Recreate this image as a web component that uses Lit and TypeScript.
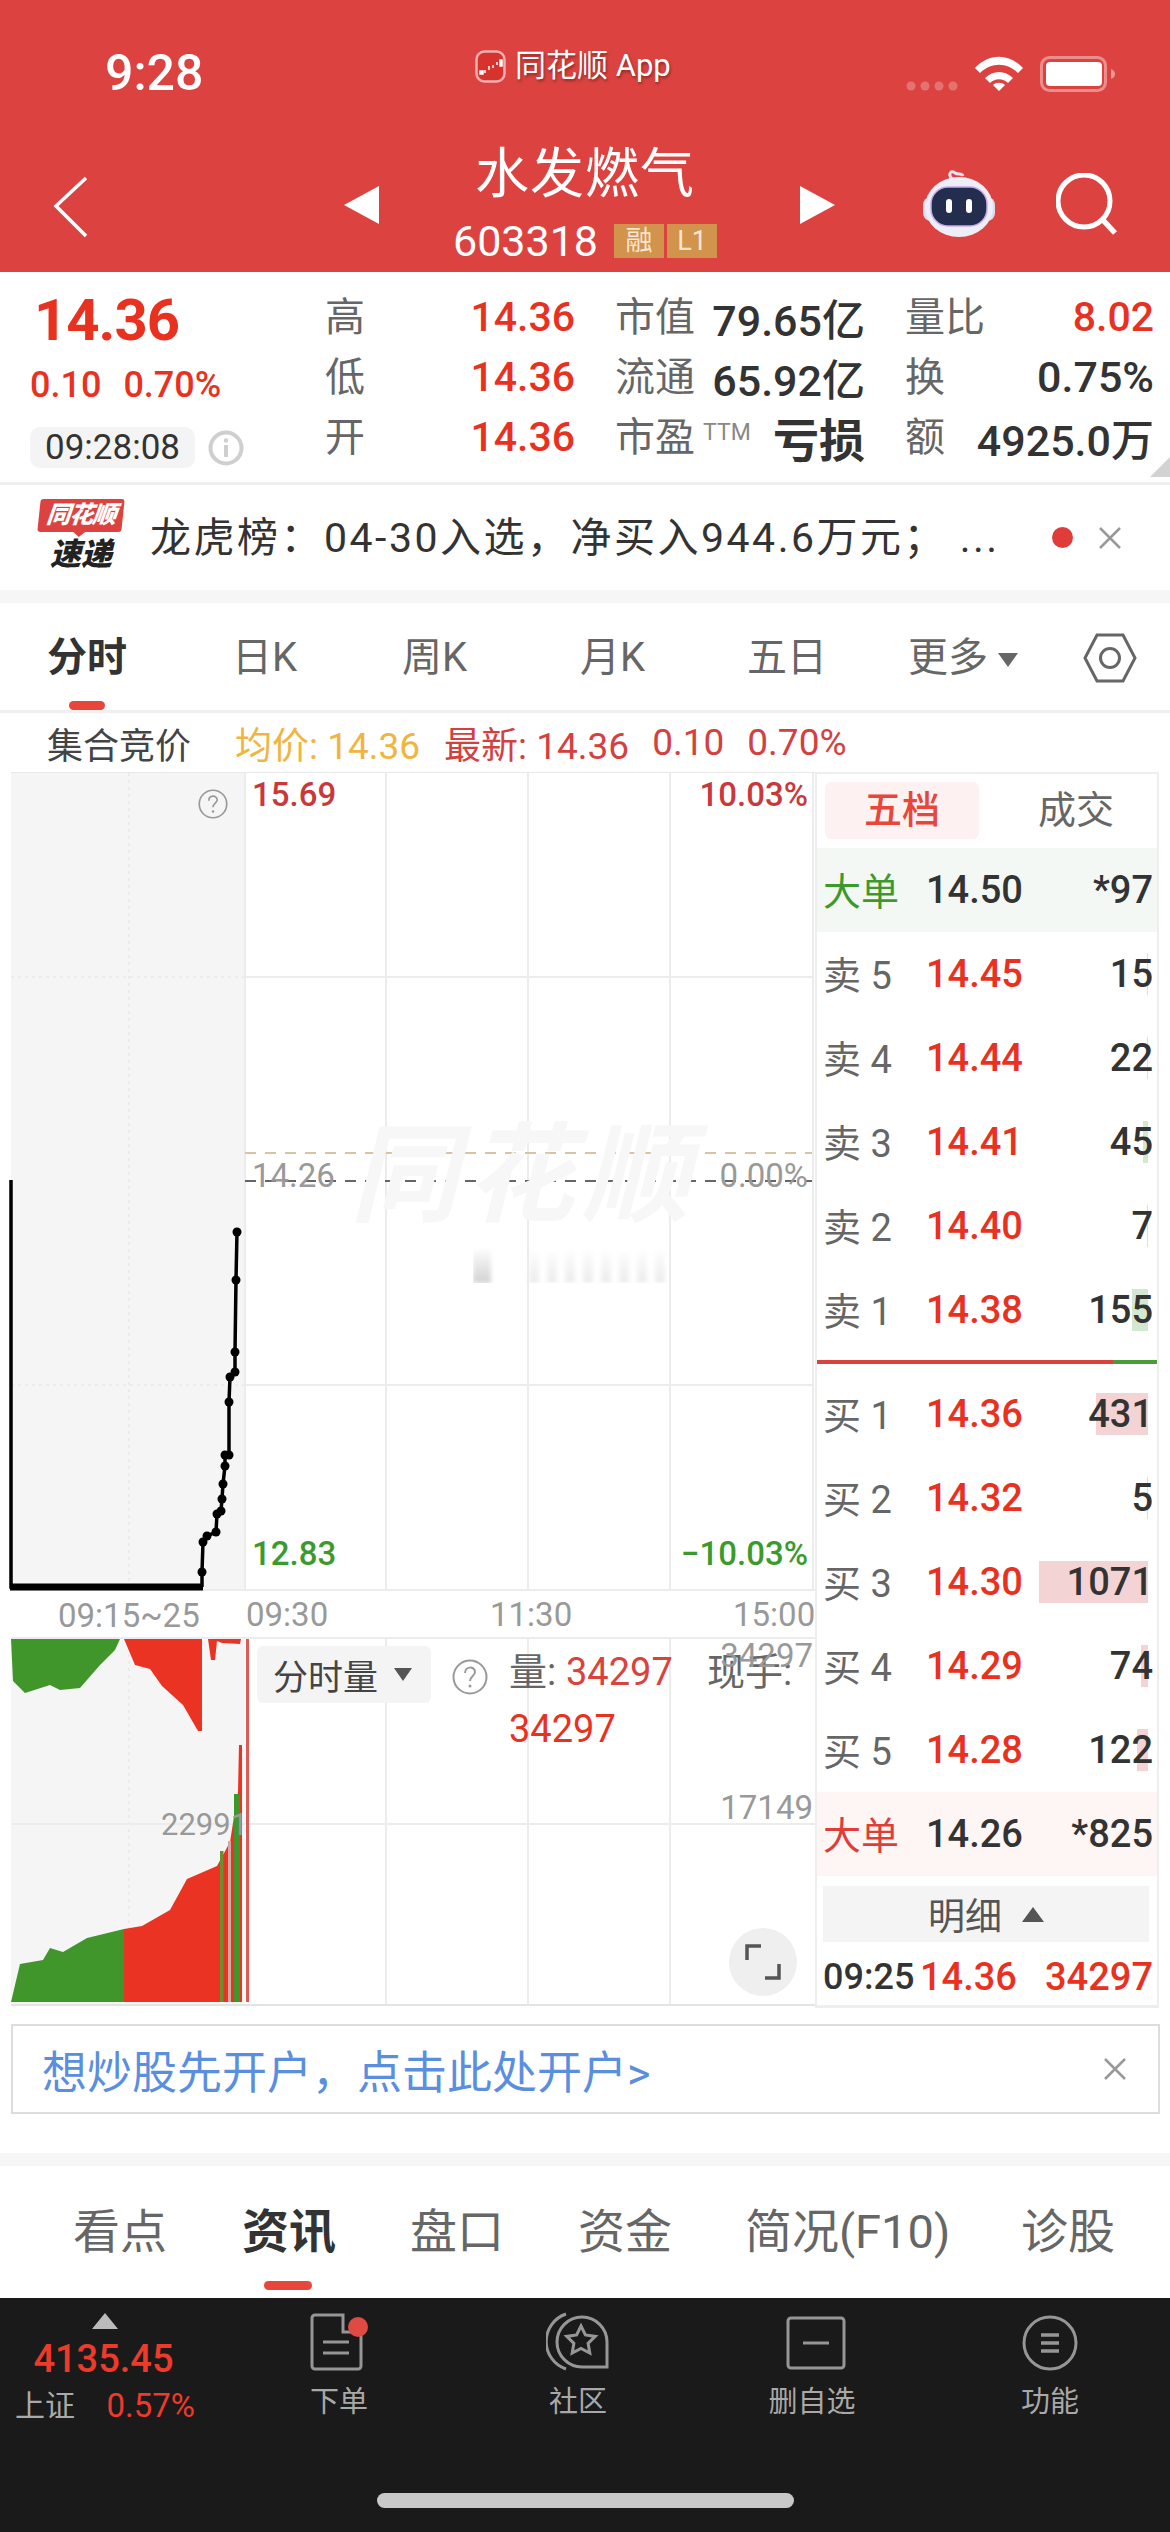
import { LitElement, html, css, svg, unsafeCSS } from 'lit'
import { customElement } from 'lit/decorators.js'

const SANS = unsafeCSS(`Roboto, 'Noto Sans CJK SC', sans-serif`)

const priceLine: [number, number][] = [
    [202, 1587], [202, 1572], [203, 1542], [207, 1536], [216, 1532], [217, 1514], [221, 1511],
    [222, 1499], [223, 1484], [225, 1466], [225, 1455], [229, 1455], [229, 1402], [230, 1377],
    [235, 1372], [235, 1352], [236, 1280], [237, 1232],
]

const sells = [
    { name: '卖 5', price: '14.45', vol: '15', bar: 1 },
    { name: '卖 4', price: '14.44', vol: '22', bar: 1 },
    { name: '卖 3', price: '14.41', vol: '45', bar: 5 },
    { name: '卖 2', price: '14.40', vol: '7', bar: 1 },
    { name: '卖 1', price: '14.38', vol: '155', bar: 16 },
]
const buys = [
    { name: '买 1', price: '14.36', vol: '431', bar: 52 },
    { name: '买 2', price: '14.32', vol: '5', bar: 1 },
    { name: '买 3', price: '14.30', vol: '1071', bar: 109 },
    { name: '买 4', price: '14.29', vol: '74', bar: 7 },
    { name: '买 5', price: '14.28', vol: '122', bar: 11 },
]

@customElement('app-root')
export class AppRoot extends LitElement {
    static styles = css`
        :host {
            display: block;
            width: 1170px;
            height: 2532px;
            overflow: hidden;
            background: #fff;
            font-family: ${SANS};
            color: #333;
        }
        .head {
            height: 272px;
            background: #dc4340;
            color: #fff;
            display: flex;
            flex-direction: column;
        }
        .status {
            height: 136px;
            display: grid;
            grid-template-columns: 370px auto 1fr;
            align-items: start;
            padding: 0 55px 0 105px;
        }
        .clock {
            font-size: 50px;
            font-weight: 500;
            line-height: 50px;
            margin-top: 48px;
        }
        .app-name {
            display: flex;
            align-items: center;
            gap: 9px;
            margin-top: 47px;
            font-size: 31px;
            line-height: 38px;
            text-shadow: 1px 2px 3px rgba(90, 20, 20, 0.6);
        }
        .status-right {
            display: flex;
            justify-content: flex-end;
            align-items: flex-start;
            margin-top: 55px;
        }
        .nav {
            flex: 1;
            display: grid;
            grid-template-columns: 1fr auto 1fr;
            align-items: start;
        }
        .nav-left {
            display: flex;
            justify-content: space-between;
            padding: 40px 74px 0 53px;
        }
        .nav-right {
            display: flex;
            justify-content: space-between;
            padding: 33px 52px 0 83px;
        }
        .title {
            display: flex;
            flex-direction: column;
            align-items: center;
            margin-top: 4px;
        }
        .title h1 {
            margin: 0;
            font-size: 54px;
            font-weight: 400;
            line-height: 70px;
            letter-spacing: 1px;
        }
        .code {
            display: flex;
            align-items: center;
            gap: 3px;
            font-size: 43px;
            line-height: 50px;
            margin-top: 6px;
        }
        .tag {
            width: 50px;
            height: 34px;
            background: #d2934d;
            font-size: 27px;
            line-height: 34px;
            text-align: center;
            color: #f8e6d0;
        }
        .tag:first-of-type {
            margin-left: 13px;
        }
        .quote {
            height: 210px;
            position: relative;
            display: grid;
            grid-template-columns: 295px 290px 290px 1fr;
            padding: 0 16px 0 30px;
            border-bottom: 3px solid #efefef;
        }
        .main-price {
            font-size: 58px;
            font-weight: 700;
            line-height: 70px;
            margin-top: 13px;
            color: #e8311f;
            letter-spacing: -1px;
            padding-left: 4px;
        }
        .main-change {
            font-size: 36px;
            font-weight: 500;
            line-height: 40px;
            margin-top: 10px;
            color: #e8311f;
            display: flex;
            gap: 22px;
        }
        .stamp {
            display: flex;
            align-items: center;
            gap: 13px;
            margin-top: 22px;
        }
        .stamp span {
            background: #f4f4f4;
            border-radius: 10px;
            width: 165px;
            height: 41px;
            font-size: 35px;
            line-height: 41px;
            text-align: center;
        }
        .col {
            display: flex;
            flex-direction: column;
            padding-top: 15px;
        }
        .row {
            height: 60px;
            display: flex;
            align-items: center;
            justify-content: space-between;
            font-size: 41px;
            font-weight: 500;
            white-space: nowrap;
        }
        .row em {
            font-style: normal;
            font-weight: 400;
            font-size: 40px;
            color: #666;
            transform: translateY(-3px);
        }
        .row .d {
            font-size: 43px;
        }
        .row .loss {
            font-size: 46px;
            font-weight: 700;
        }
        .row sup {
            font-size: 23px;
            font-weight: 400;
            color: #888;
            margin: 0 auto 10px 8px;
            line-height: 1;
        }
        .col.a,
        .col.b {
            padding-right: 40px;
        }
        .red {
            color: #e8311f;
        }
        .corner {
            position: absolute;
            right: 0;
            bottom: 5px;
            width: 0;
            height: 0;
            border-left: 20px solid transparent;
            border-bottom: 20px solid #d2d2d2;
        }
        .news {
            height: 105px;
            display: flex;
            align-items: center;
            padding: 0 47px 0 37px;
            font-size: 41px;
            line-height: 50px;
            border-bottom: 13px solid #f6f6f6;
        }
        .news-text {
            flex: 1;
            margin-left: 25px;
            white-space: nowrap;
            letter-spacing: 2.5px;
            color: #333;
        }
        .news-dot {
            width: 21px;
            height: 21px;
            border-radius: 50%;
            background: #e03d3a;
            margin-right: 24px;
        }
        .logo {
            width: 88px;
            height: 78px;
            display: flex;
            flex-direction: column;
            align-items: center;
        }
        .logo b {
            width: 84px;
            height: 33px;
            background: #dc4340;
            color: #fff;
            font-size: 24px;
            line-height: 33px;
            text-align: center;
            font-style: italic;
            font-weight: 900;
            border-radius: 3px;
            transform: skewX(-6deg);
            white-space: nowrap;
            letter-spacing: -1px;
            position: relative;
        }
        .logo b::after {
            content: '';
            position: absolute;
            left: 36px;
            top: 33px;
            border-left: 6px solid transparent;
            border-right: 6px solid transparent;
            border-top: 5px solid #dc4340;
        }
        .logo i {
            font-size: 31px;
            line-height: 37px;
            font-weight: 900;
            color: #222;
            margin-top: 4px;
            white-space: nowrap;
        }
        .tabs {
            height: 110px;
            box-sizing: border-box;
            border-bottom: 3px solid #f0f0f0;
            position: relative;
            font-size: 40px;
            color: #666;
        }
        .tab {
            position: absolute;
            top: 30px;
            line-height: 50px;
            white-space: nowrap;
        }
        .tab.on {
            color: #333;
            font-weight: 700;
        }
        .tab-bar {
            position: absolute;
            left: 69px;
            bottom: 0;
            width: 36px;
            height: 9px;
            border-radius: 5px;
            background: #e8463a;
        }
        .sub {
            height: 59px;
            display: flex;
            align-items: center;
            font-size: 37px;
            padding-left: 47px;
            white-space: nowrap;
        }
        .sub .auction {
            font-size: 36px;
            color: #444;
            margin-right: 44px;
        }
        .sub .avg {
            color: #f0b540;
            margin-right: 24px;
        }
        .sub .last {
            color: #d4403f;
            display: flex;
            align-items: center;
            gap: 23px;
        }
        .board {
            height: 1236px;
            display: grid;
            grid-template-columns: 815px 344px;
            align-items: start;
        }
        .chart {
            position: relative;
            height: 1236px;
            overflow: hidden;
        }
        .chart > svg {
            position: absolute;
            left: 0;
            top: 0;
        }
        .lbl {
            position: absolute;
            font-size: 33px;
            line-height: 36px;
            white-space: nowrap;
            transform: translateY(-50%);
        }
        .lbl.r {
            right: 7px;
        }
        .lbl.big {
            font-size: 38px;
        }
        .grey {
            color: #999;
        }
        .up {
            color: #c9383a;
            font-weight: 500;
        }
        .down {
            color: #3c9a2c;
            font-weight: 500;
        }
        .watermark {
            position: absolute;
            left: 350px;
            top: 350px;
            font-size: 108px;
            line-height: 108px;
            font-weight: 700;
            font-style: italic;
            letter-spacing: 8px;
            color: #f7f7f7;
            white-space: nowrap;
        }
        .mask {
            position: absolute;
            left: 473px;
            top: 475px;
            width: 220px;
            height: 36px;
            display: flex;
            gap: 8px;
            filter: blur(2px);
            -webkit-mask-image: linear-gradient(to bottom, transparent, #000);
        }
        .mask i {
            width: 10px;
            background: #ececec;
        }
        .mask i:first-child {
            width: 18px;
            margin-right: 30px;
            background: #d2d2d2;
        }
        .chip {
            position: absolute;
            left: 257px;
            top: 874px;
            width: 174px;
            height: 57px;
            box-sizing: border-box;
            padding-left: 16px;
            display: flex;
            align-items: center;
            gap: 16px;
            background: #f4f4f4;
            border-radius: 6px;
            font-size: 35px;
            color: #444;
        }
        .caret {
            width: 0;
            height: 0;
            border-left: 9px solid transparent;
            border-right: 9px solid transparent;
            border-top: 13px solid #555;
        }
        .expand {
            position: absolute;
            left: 729px;
            top: 1156px;
            width: 68px;
            height: 68px;
            border-radius: 50%;
            background: #efefef;
            display: flex;
            align-items: center;
            justify-content: center;
        }
        .depth {
            height: 1236px;
            border: 2px solid #eee;
            border-bottom-width: 3px;
            box-sizing: border-box;
            width: 344px;
            display: flex;
            flex-direction: column;
        }
        .seg {
            height: 74px;
            display: flex;
            align-items: flex-start;
            font-size: 38px;
            color: #666;
            flex: none;
        }
        .seg span {
            height: 57px;
            margin-top: 8px;
            line-height: 57px;
            text-align: center;
            width: 154px;
            margin-left: 8px;
            border-radius: 6px;
            flex: none;
        }
        .seg span:last-child {
            flex: 1;
            padding-left: 8px;
        }
        .seg .on {
            background: #fdf2f1;
            color: #e8463a;
            font-weight: 500;
        }
        .lv {
            height: 84px;
            flex: none;
            display: grid;
            grid-template-columns: 103px 94px 1fr;
            align-items: center;
            padding: 0 4px 0 6px;
            font-size: 38px;
            font-weight: 500;
            white-space: nowrap;
        }
        .lv em {
            font-style: normal;
            font-weight: 400;
            font-size: 38px;
            color: #666;
            transform: translateY(-2px);
        }
        .lv .p {
            color: #e8311f;
        }
        .lv .v {
            position: relative;
            text-align: right;
            line-height: 42px;
            color: #333;
        }
        .vol-bar {
            position: absolute;
            right: 5px;
            top: 0;
            bottom: 0;
        }
        .vol-num {
            position: relative;
        }
        .lv.big-g {
            background: #f3f8f4;
        }
        .lv.big-g em {
            color: #3c9a2c;
        }
        .lv.big-r {
            background: #fdf6f5;
        }
        .lv.big-r em {
            color: #e03d3a;
        }
        .big-p {
            color: #333;
        }
        .split {
            height: 4px;
            flex: none;
            margin: 8px 0;
            background: linear-gradient(90deg, #d9433c 0 87%, #4a9c3a 87%);
        }
        .detail {
            flex: none;
            height: 56px;
            margin: 10px 8px 0 6px;
            background: #f4f4f4;
            display: flex;
            align-items: center;
            justify-content: center;
            gap: 20px;
            font-size: 37px;
            color: #555;
        }
        .detail i {
            border-left: 11px solid transparent;
            border-right: 11px solid transparent;
            border-bottom: 15px solid #555;
        }
        .tick {
            flex: none;
            height: 58px;
            margin-top: 6px;
            display: grid;
            grid-template-columns: 97px 94px 1fr;
            align-items: center;
            padding: 0 4px 0 6px;
            font-size: 38px;
            font-weight: 500;
        }
        .tick span:first-child {
            font-size: 36px;
        }
        .banner {
            margin: 16px 10px 0 11px;
            height: 90px;
            box-sizing: border-box;
            border: 2px solid #ddd;
            display: flex;
            align-items: center;
            justify-content: space-between;
            padding: 0 31px 0 29px;
            font-size: 45px;
            color: #5a8ede;
            white-space: nowrap;
        }
        .band {
            height: 13px;
            margin-top: 39px;
            background: #f6f6f6;
        }
        .lower {
            height: 132px;
            position: relative;
            font-size: 47px;
            color: #666;
        }
        .lower span {
            position: absolute;
            top: 37px;
            line-height: 58px;
            white-space: nowrap;
        }
        .lower .on {
            color: #333;
            font-weight: 700;
        }
        .lower i {
            position: absolute;
            left: 264px;
            top: 115px;
            width: 48px;
            height: 9px;
            border-radius: 5px;
            background: #e8463a;
        }
        .dock {
            height: 234px;
            background: #1a1a1a;
            position: relative;
        }
        .index {
            position: absolute;
            left: 15px;
            top: 15px;
            width: 180px;
            display: flex;
            flex-direction: column;
            align-items: center;
        }
        .index i {
            border-left: 13px solid transparent;
            border-right: 13px solid transparent;
            border-bottom: 16px solid #bbb;
        }
        .index b {
            font-size: 38px;
            font-weight: 500;
            line-height: 44px;
            color: #ee3a2a;
            margin-top: 8px;
            margin-right: 3px;
        }
        .index div {
            display: flex;
            align-self: stretch;
            justify-content: space-between;
            align-items: center;
            font-size: 30px;
            line-height: 44px;
            margin-top: 3px;
            color: #aaa;
        }
        .index div span {
            font-size: 33px;
            color: #ee3a2a;
        }
        .action {
            position: absolute;
            top: 14px;
            width: 120px;
            display: flex;
            flex-direction: column;
            align-items: center;
            font-size: 29px;
            line-height: 34px;
            color: #a8a8a8;
        }
        .action svg {
            margin-bottom: 13px;
        }
        .home {
            position: absolute;
            left: 377px;
            top: 195px;
            width: 417px;
            height: 15px;
            border-radius: 8px;
            background: #c8c8c8;
        }
    `

    private renderPriceSvg() {
        const pts = priceLine.map((p) => p.join(',')).join(' ')
        const gridX = [386, 528, 670]
        return html`<svg width="815" height="1236" viewBox="0 772 815 1236">
            <rect x="11" y="773" width="234" height="816" fill="#f5f5f5" />
            <rect x="11" y="1640" width="234" height="364" fill="#f5f5f5" />
            ${gridX.map(
                (x) => svg`<line x1=${x} y1="773" x2=${x} y2="1590" stroke="#ececec" stroke-width="2" />
                    <line x1=${x} y1="1639" x2=${x} y2="2005" stroke="#ececec" stroke-width="2" />`
            )}
            ${[977, 1385].map(
                (y) => svg`<line x1="245" y1=${y} x2="813" y2=${y} stroke="#ececec" stroke-width="2" />
                    <line x1="11" y1=${y} x2="245" y2=${y} stroke="#ececec" stroke-width="2" stroke-dasharray="3 4" />`
            )}
            <line x1="129" y1="773" x2="129" y2="1590" stroke="#ebebeb" stroke-width="2" stroke-dasharray="3 4" />
            <line x1="129" y1="1640" x2="129" y2="2002" stroke="#ebebeb" stroke-width="2" stroke-dasharray="3 4" />
            <line x1="245" y1="773" x2="245" y2="1590" stroke="#ececec" stroke-width="2" />
            <line x1="11" y1="772" x2="815" y2="772" stroke="#e8e8e8" stroke-width="2" />
            <line x1="11" y1="1590" x2="815" y2="1590" stroke="#ececec" stroke-width="2" />
            <line x1="11" y1="1638" x2="815" y2="1638" stroke="#ececec" stroke-width="2" />
            <line x1="11" y1="2005" x2="815" y2="2005" stroke="#e4e4e4" stroke-width="2" />
            <line x1="11" y1="1824" x2="815" y2="1824" stroke="#ececec" stroke-width="2" />
            <line x1="813" y1="773" x2="813" y2="1590" stroke="#ececec" stroke-width="2" />

            <line x1="245" y1="1153" x2="812" y2="1153" stroke="#d8c4a2" stroke-width="2" stroke-dasharray="11 9" />
            <line x1="245" y1="1181" x2="812" y2="1181" stroke="#666" stroke-width="2" stroke-dasharray="11 9" />

            <polyline points="11,1180 11,1587 202,1587" fill="none" stroke="#000" stroke-width="3.5" />
            <line x1="10" y1="1587" x2="203" y2="1587" stroke="#000" stroke-width="7" />
            <polyline points=${pts} fill="none" stroke="#000" stroke-width="3.5" />
            ${priceLine.slice(1).map(([x, y]) => svg`<circle cx=${x} cy=${y} r="4.5" fill="#000" />`)}

            <path d="M11 1639 L13 1681 L25 1693 L50 1685 L60 1690 L80 1688 L100 1665 L115 1650 L120 1639Z" fill="#41962b" />
            <path d="M124 1639 L135 1665 L150 1669 L162 1686 L183 1705 L198 1731 L202 1731 L202 1639Z" fill="#ea3323" />
            <path d="M208 1639 L211 1660 L215 1660 L217 1641 L222 1643 L240 1644 L241 1639Z" fill="#ea3323" />
            <path d="M11 2002 L20 1964 L43 1960 L50 1948 L63 1952 L87 1938 L124 1929 L124 2002Z" fill="#41962b" />
            <path d="M124 1929 L142 1926 L170 1910 L187 1879 L217 1866 L230 1842 L233 1823 L238 1792 L239 1745 L242 1745 L242 2002 L124 2002Z" fill="#ea3323" />
            <rect x="220" y="1851" width="3.5" height="151" fill="#6b8f2e" />
            <rect x="228" y="1841" width="3" height="161" fill="#d0a9a5" />
            <rect x="234" y="1794" width="6" height="208" fill="#41962b" />
            <rect x="246" y="1639" width="3" height="363" fill="#e05a55" />
        </svg>`
    }

    private helpIcon(size: number) {
        return html`<svg width=${size} height=${size} viewBox="0 0 36 36" style="display:block">
            <circle cx="18" cy="18" r="16.5" fill="none" stroke="#999" stroke-width="2" />
            <path d="M13 14c0-7 10-7 10-1 0 4-5 4-5 9" fill="none" stroke="#999" stroke-width="2" />
            <circle cx="18" cy="27" r="1.5" fill="#999" />
        </svg>`
    }

    private level(r: { name: string; price: string; vol: string; bar: number }, color: string) {
        return html`<div class="lv">
            <em>${r.name}</em><span class="p">${r.price}</span>
            <span class="v"
                ><span class="vol-bar" style="width:${r.bar}px;background:${color}"></span
                ><span class="vol-num">${r.vol}</span></span
            >
        </div>`
    }

    render() {
        return html`
            <div class="head">
                <div class="status">
                    <div class="clock">9:28</div>
                    <div class="app-name">
                        <svg width="31" height="33" viewBox="0 0 31 33">
                            <rect x="1.5" y="1.5" width="28" height="30" rx="8" fill="#d8322f" stroke="#f0b0ae" stroke-width="2.5" />
                            <path d="M5 21h3v3h-3zM10 20v3M14 16v4M18 15v3M22 12v3M25 10h2v6h-2z" fill="#fff" stroke="#fff" stroke-width="1.5" />
                        </svg>
                        同花顺 App
                    </div>
                    <div class="status-right">
                        <svg width="210" height="40" viewBox="905 55 210 40">
                            <g fill="#fff" opacity="0.25">
                                <circle cx="911" cy="86" r="4.5" /><circle cx="925" cy="86" r="4.5" /><circle cx="939" cy="86" r="4.5" /><circle cx="953" cy="86" r="4.5" />
                            </g>
                            <path d="M975 68c14-15 34-15 48 0l-5 5c-11-11-27-11-38 0zM985 78c8-8 20-8 28 0l-5 5c-5-5-13-5-18 0zM993 85c3-3 9-3 12 0l-6 6z" fill="#fff" />
                            <rect x="1041.5" y="57.5" width="64" height="33" rx="8" fill="none" stroke="#fff" stroke-opacity="0.4" stroke-width="3" />
                            <rect x="1046" y="62" width="56" height="24" rx="4" fill="#fff" />
                            <path d="M1111 69c3 1 4 3 4 5s-1 4-4 5z" fill="#fff" fill-opacity="0.45" />
                        </svg>
                    </div>
                </div>
                <div class="nav">
                    <div class="nav-left">
                        <svg width="36" height="62" viewBox="0 0 36 62">
                            <path d="M33 2 L3 30 L33 60" fill="none" stroke="#fff" stroke-width="3.5" />
                        </svg>
                        <svg width="35" height="38" viewBox="0 0 35 38" style="margin-top:10px">
                            <path d="M35 0V38L0 19z" fill="#fff" />
                        </svg>
                    </div>
                    <div class="title">
                        <h1>水发燃气</h1>
                        <div class="code">603318<span class="tag">融</span><span class="tag">L1</span></div>
                    </div>
                    <div class="nav-right">
                        <svg width="35" height="38" viewBox="0 0 35 38" style="margin-top:17px">
                            <path d="M0 0V38L35 19z" fill="#fff" />
                        </svg>
                        <div style="display:flex;gap:60px">
                            <svg width="74" height="70" viewBox="0 0 74 70">
                                <path d="M30 10c-5-6 0-9 3-6 3 2 7 0 8 3" fill="none" stroke="#e6e0f4" stroke-width="3" />
                                <rect x="1" y="28" width="72" height="24" rx="8" fill="#dcdcf0" />
                                <ellipse cx="37" cy="38" rx="34" ry="30" fill="#eeeef8" />
                                <rect x="9" y="18" width="56" height="39" rx="17" fill="#232d4e" stroke="#c6a9ec" stroke-width="1.5" />
                                <rect x="24" y="30" width="6" height="14" rx="3" fill="#fff" />
                                <rect x="44" y="30" width="6" height="14" rx="3" fill="#fff" />
                            </svg>
                            <svg width="62" height="62" viewBox="0 0 62 62" style="margin-top:4px">
                                <circle cx="28" cy="28" r="26" fill="none" stroke="#fff" stroke-width="5" />
                                <path d="M46 46L59 60" stroke="#fff" stroke-width="5.5" />
                            </svg>
                        </div>
                    </div>
                </div>
            </div>

            <div class="quote">
                <div>
                    <div class="main-price">14.36</div>
                    <div class="main-change"><span>0.10</span><span>0.70%</span></div>
                    <div class="stamp">
                        <span>09:28:08</span>
                        <svg width="36" height="36" viewBox="0 0 36 36">
                            <circle cx="18" cy="18" r="15.5" fill="none" stroke="#cfcfcf" stroke-width="4" />
                            <rect x="16" y="15" width="4" height="12" fill="#cfcfcf" />
                            <circle cx="18" cy="10.5" r="2.2" fill="#cfcfcf" />
                        </svg>
                    </div>
                </div>
                <div class="col a">
                    <div class="row"><em>高</em><span class="red">14.36</span></div>
                    <div class="row"><em>低</em><span class="red">14.36</span></div>
                    <div class="row"><em>开</em><span class="red">14.36</span></div>
                </div>
                <div class="col b">
                    <div class="row"><em>市值</em><span class="d">79.65亿</span></div>
                    <div class="row"><em>流通</em><span class="d">65.92亿</span></div>
                    <div class="row"><em>市盈</em><sup>TTM</sup><span class="loss">亏损</span></div>
                </div>
                <div class="col c">
                    <div class="row"><em>量比</em><span class="red">8.02</span></div>
                    <div class="row"><em>换</em><span class="d">0.75%</span></div>
                    <div class="row"><em>额</em><span class="d">4925.0万</span></div>
                </div>
                <div class="corner"></div>
            </div>

            <div class="news">
                <div class="logo"><b>同花顺</b><i>速递</i></div>
                <div class="news-text">龙虎榜：04-30入选，净买入944.6万元； ...</div>
                <div class="news-dot"></div>
                <svg width="26" height="26" viewBox="0 0 26 26">
                    <path d="M3 3L23 23M23 3L3 23" stroke="#999" stroke-width="2.5" />
                </svg>
            </div>

            <div class="tabs">
                <span class="tab on" style="left:47px">分时</span>
                <span class="tab" style="left:232px">日K</span>
                <span class="tab" style="left:402px">周K</span>
                <span class="tab" style="left:580px">月K</span>
                <span class="tab" style="left:747px">五日</span>
                <span class="tab" style="left:908px">更多</span>
                <svg style="position:absolute;left:998px;top:50px" width="20" height="14" viewBox="0 0 20 14">
                    <path d="M0 0H20L10 14z" fill="#666" />
                </svg>
                <svg style="position:absolute;left:1083px;top:30px" width="54" height="50" viewBox="0 0 54 50">
                    <path d="M14 2H40L52 25 40 48H14L2 25z" fill="none" stroke="#666" stroke-width="3" />
                    <circle cx="27" cy="25" r="9.5" fill="none" stroke="#666" stroke-width="3" />
                </svg>
                <i class="tab-bar"></i>
            </div>

            <div class="sub">
                <span class="auction">集合竞价</span>
                <span class="avg">均价: 14.36</span>
                <span class="last"><span>最新: 14.36</span><span>0.10</span><span>0.70%</span></span>
            </div>

            <div class="board">
                <div class="chart">
                    ${this.renderPriceSvg()}
                    <div class="watermark">同花顺</div>
                    <div class="mask">
                        <i></i><i></i><i></i><i></i><i></i><i></i><i></i><i></i><i></i>
                    </div>
                    <div style="position:absolute;left:198px;top:17px">${this.helpIcon(30)}</div>

                    <span class="lbl up" style="left:252px;top:23px">15.69</span>
                    <span class="lbl r up" style="top:23px">10.03%</span>
                    <span class="lbl grey" style="left:252px;top:404px">14.26</span>
                    <span class="lbl r grey" style="top:404px">0.00%</span>
                    <span class="lbl down" style="left:252px;top:782px">12.83</span>
                    <span class="lbl r down" style="top:782px">−10.03%</span>

                    <span class="lbl grey" style="left:58px;top:844px">09:15~25</span>
                    <span class="lbl grey" style="left:246px;top:843px">09:30</span>
                    <span class="lbl grey" style="left:490px;top:843px">11:30</span>
                    <span class="lbl grey" style="left:733px;top:843px">15:00</span>

                    <div class="chip">分时量<i class="caret"></i></div>
                    <div style="position:absolute;left:452px;top:887px">${this.helpIcon(36)}</div>
                    <span class="lbl big" style="left:509px;top:900px;color:#666">量:</span>
                    <span class="lbl big" style="left:566px;top:900px;color:#d9433c">34297</span>
                    <span class="lbl big" style="left:707px;top:900px;color:#666">现手:</span>
                    <span class="lbl big" style="left:509px;top:957px;color:#e8311f">34297</span>
                    <span class="lbl r grey" style="right:2px;top:884px">34297</span>
                    <span class="lbl r grey" style="right:2px;top:1036px">17149</span>
                    <span class="lbl grey" style="left:161px;top:1053px;font-size:31px">22991</span>

                    <div class="expand">
                        <svg width="36" height="36" viewBox="0 0 36 36">
                            <path d="M2 16V2H16M34 20V34H20" fill="none" stroke="#555" stroke-width="3.5" />
                        </svg>
                    </div>
                </div>

                <div class="depth">
                    <div class="seg"><span class="on">五档</span><span>成交</span></div>
                    <div class="lv big-g"><em>大单</em><span class="big-p">14.50</span><span class="v">*97</span></div>
                    ${sells.map((r) => this.level(r, '#d3e8d0'))}
                    <div class="split"></div>
                    ${buys.map((r) => this.level(r, '#f4d3d4'))}
                    <div class="lv big-r"><em>大单</em><span class="big-p">14.26</span><span class="v">*825</span></div>
                    <div class="detail">明细<i></i></div>
                    <div class="tick"><span>09:25</span><span class="red">14.36</span><span class="red" style="text-align:right">34297</span></div>
                </div>
            </div>

            <div class="banner">
                <span>想炒股先开户，点击此处开户&gt;</span>
                <svg width="24" height="24" viewBox="0 0 24 24">
                    <path d="M2 2L22 22M22 2L2 22" stroke="#999" stroke-width="2.5" />
                </svg>
            </div>
            <div class="band"></div>

            <div class="lower">
                <span style="left:73px">看点</span>
                <span class="on" style="left:242px">资讯</span>
                <span style="left:410px">盘口</span>
                <span style="left:578px">资金</span>
                <span style="left:745px">简况(F10)</span>
                <span style="left:1021px">诊股</span>
                <i></i>
            </div>

            <div class="dock">
                <div class="index">
                    <i></i>
                    <b>4135.45</b>
                    <div>上证<span>0.57%</span></div>
                </div>
                <div class="action" style="left:279px">
                    <svg width="64" height="60" viewBox="0 0 64 60">
                        <path d="M36 3H8a3 3 0 0 0-3 3v48a3 3 0 0 0 3 3h43a3 3 0 0 0 3-3V20H36z" fill="none" stroke="#969696" stroke-width="3" />
                        <path d="M16 30H42M16 41H42" stroke="#969696" stroke-width="3" />
                        <circle cx="51" cy="15" r="10" fill="#e04a42" />
                    </svg>
                    下单
                </div>
                <div class="action" style="left:518px">
                    <svg width="64" height="60" viewBox="0 0 64 60">
                        <path d="M20 2A29 29 0 0 0 20 57" fill="none" stroke="#969696" stroke-width="3" />
                        <path d="M61 55V30A25 25 0 1 0 36 55Z" fill="none" stroke="#969696" stroke-width="3" />
                        <path d="M35 14L39.4 22.9 49.3 24.4 42.1 31.3 43.8 41.1 35 36.5 26.2 41.1 27.9 31.3 20.7 24.4 30.6 22.9Z" fill="none" stroke="#969696" stroke-width="3" />
                    </svg>
                    社区
                </div>
                <div class="action" style="left:752px">
                    <svg width="68" height="60" viewBox="0 0 68 60">
                        <rect x="10" y="6" width="56" height="50" rx="3" fill="none" stroke="#969696" stroke-width="3" />
                        <path d="M25 31H51" stroke="#969696" stroke-width="3" />
                    </svg>
                    删自选
                </div>
                <div class="action" style="left:990px">
                    <svg width="60" height="60" viewBox="0 0 60 60">
                        <circle cx="30" cy="31" r="26" fill="none" stroke="#969696" stroke-width="3" />
                        <path d="M21 23H39M21 31H39M21 39H39" stroke="#969696" stroke-width="3.5" />
                    </svg>
                    功能
                </div>
                <div class="home"></div>
            </div>
        `
    }
}
